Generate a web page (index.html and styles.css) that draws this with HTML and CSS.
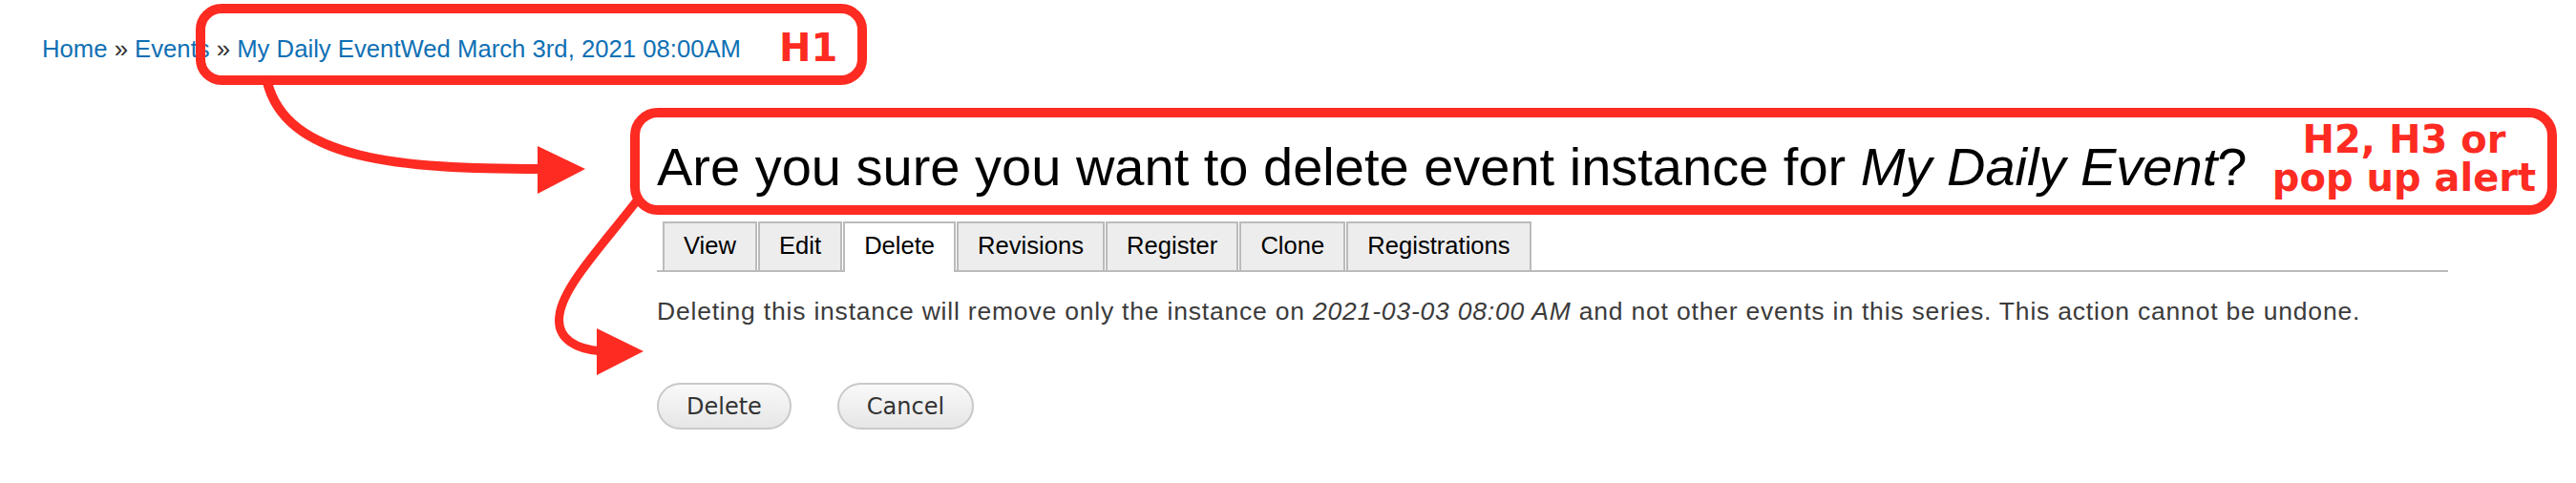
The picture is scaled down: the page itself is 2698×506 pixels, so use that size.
FILE: index.html
```html
<!DOCTYPE html>
<html lang="en">
<head>
    <meta charset="UTF-8">
    <title>Delete event instance</title>
    <link rel="stylesheet" href="styles.css">
</head>
<body>
    <div class="page">
        <div class="breadcrumb">
            <a href="#">Home</a> <span class="sep">»</span> <a href="#">Events</a> <span class="sep">»</span> <a href="#">My Daily EventWed March 3rd, 2021 08:00AM</a>
        </div>

        <div class="main">
            <h1 class="title">Are you sure you want to delete event instance for <em>My Daily Event</em>?</h1>

            <ul class="tabs">
                <li><a href="#">View</a></li>
                <li><a href="#">Edit</a></li>
                <li class="active"><a href="#">Delete</a></li>
                <li><a href="#">Revisions</a></li>
                <li><a href="#">Register</a></li>
                <li><a href="#">Clone</a></li>
                <li><a href="#">Registrations</a></li>
            </ul>

            <p class="desc">Deleting this instance will remove only the instance on <em>2021-03-03 08:00 AM</em> and not other events in this series. This action cannot be undone.</p>

            <div class="actions">
                <button class="btn">Delete</button>
                <button class="btn">Cancel</button>
            </div>
        </div>

        <!-- annotation layer drawn over the page -->
        <svg class="marks" width="2698" height="506" viewBox="0 0 2698 506">
            <rect x="210" y="9" width="693" height="75" rx="22" class="box"/>
            <rect x="665" y="118" width="2008" height="102" rx="24" class="box"/>
            <path d="M280 86 C300 168, 420 177, 566 177" class="line"/>
            <polygon points="563,153 613,177 563,203" class="head"/>
            <path d="M668 209 C630 258, 590 300, 586 330 C582 356, 605 366, 630 368" class="line thin"/>
            <polygon points="625,344 674,368 625,393" class="head"/>
        </svg>
        <div class="tag tag-h1">H1</div>
        <div class="tag tag-h2">
            <div>H2, H3 or</div>
            <div>pop up alert</div>
        </div>
    </div>
</body>
</html>
```

FILE: styles.css
```css
body {
    margin: 0;
    background: #fff;
    font-family: "Liberation Sans", Arial, sans-serif;
    color: #000;
}
.page {
    position: relative;
    width: 2698px;
    height: 506px;
    overflow: hidden;
}
.breadcrumb {
    padding: 35px 0 0 44px;
    font-size: 25.7px;
    line-height: 32px;
    color: #333;
}
.breadcrumb a {
    color: #0f70b4;
    text-decoration: none;
}
.breadcrumb .sep {
    color: #333;
}
.main {
    margin-left: 688px;
    width: 1876px;
}
.title {
    width: fit-content;
    margin: 74px 0 0;
    font-size: 56px;
    font-weight: normal;
    line-height: 67px;
}
.tabs {
    display: flex;
    list-style: none;
    margin: 24px 0 0;
    padding: 0 6px;
    border-bottom: 2px solid #bbb;
    height: 51px;
}
.tabs li {
    margin-right: 1px;
}
.tabs li a {
    display: block;
    padding: 9px 20px 11px;
    border: 2px solid #bbb;
    border-bottom: none;
    background: #ededed;
    color: #000;
    font-size: 25.6px;
    line-height: 29px;
    text-decoration: none;
}
.tabs li.active a {
    background: #fff;
    padding-bottom: 13px;
}
.desc {
    margin: 27px 0 0;
    font-size: 26.5px;
    letter-spacing: 0.8px;
    line-height: 29px;
    color: #3b3b3b;
}
.actions {
    display: flex;
    gap: 48px;
    margin-top: 60px;
}
.btn {
    height: 49px;
    padding: 0 29px;
    border: 2px solid #c9c9c9;
    border-radius: 25px;
    background: linear-gradient(#f9f9f9, #e6e6e6);
    font-family: "DejaVu Sans", Verdana, sans-serif;
    font-size: 24px;
    color: #333;
}
.marks {
    position: absolute;
    top: 0;
    left: 0;
    pointer-events: none;
}
.box {
    fill: none;
    stroke: #fd2b22;
    stroke-width: 10;
}
.line {
    fill: none;
    stroke: #fd2b22;
    stroke-width: 10;
    stroke-linecap: round;
}
.line.thin {
    stroke-width: 9;
}
.head {
    fill: #fd2b22;
}
.tag {
    position: absolute;
    font-family: "DejaVu Sans", Verdana, sans-serif;
    font-weight: bold;
    font-size: 40px;
    line-height: 40px;
    color: #fd2b22;
}
.tag-h1 {
    left: 816px;
    top: 30px;
}
.tag-h2 {
    left: 2368px;
    top: 126px;
    width: 300px;
    text-align: center;
}
```
